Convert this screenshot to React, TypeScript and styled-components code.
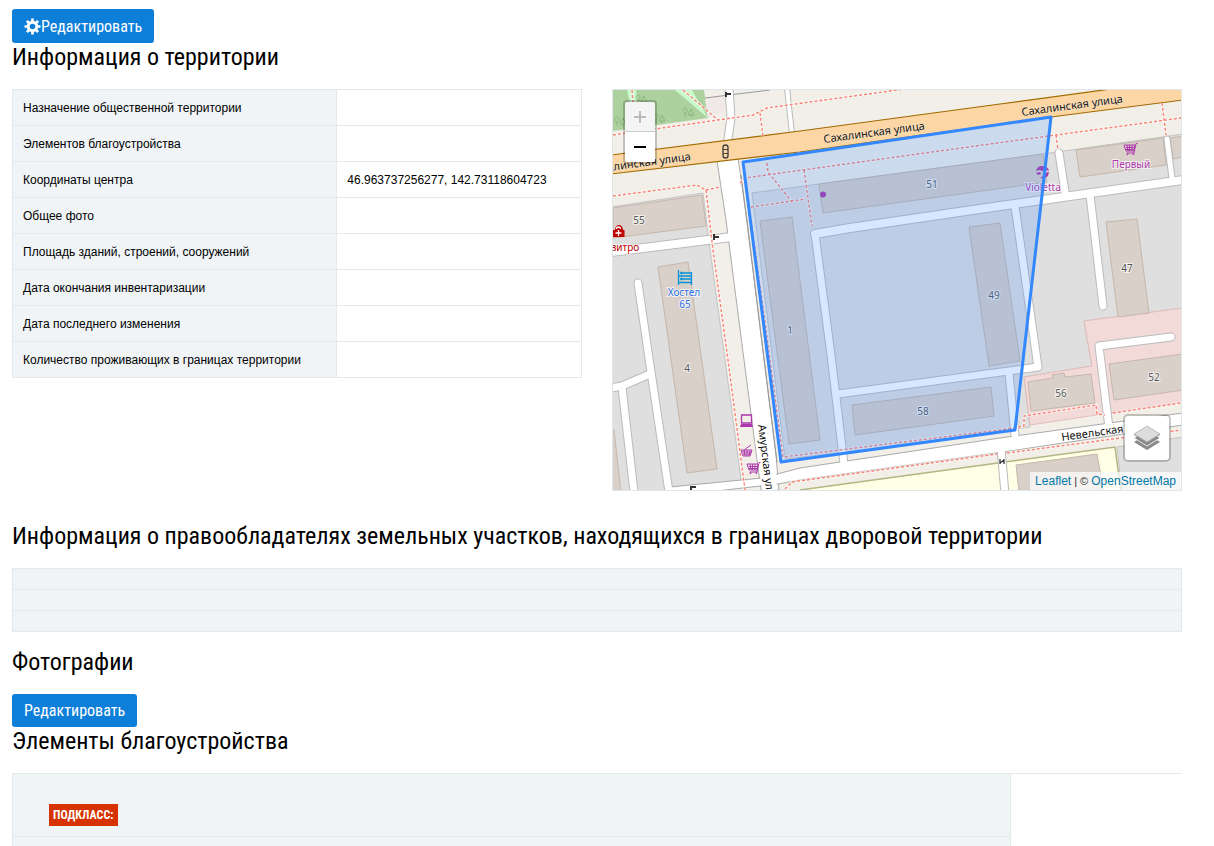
import React from "react";
import styled, { createGlobalStyle } from "styled-components";

const GlobalStyle = createGlobalStyle`
  *, *::before, *::after { box-sizing: border-box; }
  body {
    margin: 0;
    background: #fff;
    color: #000;
    font: 12px/20px "Liberation Sans", Arial, sans-serif;
  }
`;

const condensed = `"Roboto Condensed", "Liberation Sans Narrow", Roboto, sans-serif`;

const Page = styled.main`
  padding: 9px 32px 0 12px;
`;

const EditButton = styled.button<{ $withIcon?: boolean }>`
  display: flex;
  align-items: center;
  height: ${(p) => (p.$withIcon ? 34 : 33)}px;
  padding: 1px 12px 0;
  border: 0;
  border-radius: 3px;
  background: #0e7fd9;
  color: #fff;
  font: 16px/24px ${condensed};
  cursor: pointer;
`;

const Heading = styled.h2`
  margin: 0 0 18px;
  font: 400 24px/28px ${condensed};
`;

const Columns = styled.section`
  display: grid;
  grid-template-columns: 1fr 1fr;
  align-items: start;
  gap: 30px;
  margin-bottom: 31px;
`;

const Table = styled.table`
  width: 100%;
  border-collapse: collapse;
  table-layout: fixed;
`;

const LabelCell = styled.th`
  width: 57%;
  height: 36px;
  padding: 0 10px;
  border: 1px solid #e4e9ec;
  background: #f0f4f7;
  font-weight: 400;
  text-align: left;
`;

const ValueCell = styled.td`
  padding: 0 10px;
  border: 1px solid #e4e9ec;
`;

const OwnersTable = styled(Table)`
  margin-bottom: 16px;
`;

const OwnerCell = styled.td`
  height: 21px;
  padding: 0;
  border: 1px solid #e4e9ec;
  background: #f0f4f7;
`;

const ElementsTable = styled(Table)`
  border-top: 1px solid #e4e9ec;
`;

const ElementCell = styled.td<{ $tall?: boolean }>`
  width: 998px;
  height: ${(p) => (p.$tall ? 63 : 10)}px;
  padding: ${(p) => (p.$tall ? "20px 36px 0" : "0")};
  border: 1px solid #e4e9ec;
  border-bottom: 0;
  background: #f0f4f7;
`;

const EmptyCell = styled.td`
  padding: 0;
`;

const Tag = styled.span`
  display: inline-block;
  padding: 0 4px;
  background: #d63300;
  color: #fff;
  font: 700 12px/22px ${condensed};
  text-transform: uppercase;
`;

const MapFrame = styled.div`
  position: relative;
  height: 402px;
  border: 1px solid #e0e6ea;
  overflow: hidden;
`;

const MapCanvas = styled.svg`
  display: block;
  width: 100%;
  height: 100%;
`;

const ZoomControl = styled.div`
  position: absolute;
  top: 10px;
  left: 10px;
  border: 2px solid rgba(0, 0, 0, 0.2);
  border-radius: 4px;
  background-clip: padding-box;
  overflow: hidden;
`;

const ZoomButton = styled.button`
  display: flex;
  align-items: center;
  justify-content: center;
  width: 30px;
  height: 30px;
  padding: 0;
  border: 0;
  background: #fff;
  color: #000;

  &:disabled {
    border-bottom: 1px solid #ccc;
    background: #f4f4f4;
    color: #bbb;
  }
`;

const LayersButton = styled.button`
  position: absolute;
  right: 10px;
  bottom: 28px;
  display: flex;
  align-items: center;
  justify-content: center;
  width: 48px;
  height: 48px;
  padding: 0;
  border: 2px solid rgba(0, 0, 0, 0.2);
  border-radius: 5px;
  background: #fff;
  background-clip: padding-box;
`;

const Attribution = styled.div`
  position: absolute;
  right: 0;
  bottom: 0;
  padding: 1px 5px 0;
  background: rgba(255, 255, 255, 0.7);
  color: #333;
  font-size: 11px;
  line-height: 17px;
  white-space: nowrap;

  a {
    color: #0078a8;
    font-size: 12px;
    text-decoration: none;
  }
`;

const info: [string, string][] = [
  ["Назначение общественной территории", ""],
  ["Элементов благоустройства", ""],
  ["Координаты центра", "46.963737256277, 142.73118604723"],
  ["Общее фото", ""],
  ["Площадь зданий, строений, сооружений", ""],
  ["Дата окончания инвентаризации", ""],
  ["Дата последнего изменения", ""],
  ["Количество проживающих в границах территории", ""],
];

const buildings = [
  "613,208 702,195 706,226 613,238",
  "819,184 1043,154 1047,182 823,213",
  "1076,150 1163,138 1166,165 1080,177",
  "1170,138 1183,136 1183,157 1173,159",
  "760,221 792,217 820,440 789,444",
  "969,227 1000,223 1020,361 989,366",
  "1106,222 1137,219 1149,313 1118,317",
  "658,267 688,262 717,469 687,473",
  "852,405 991,387 994,416 855,435",
  "1028,382 1053,378 1052,375 1064,373 1065,377 1091,374 1095,403 1031,411",
  "1109,364 1183,354 1183,390 1114,400",
  "611,430 614,430 621,492 611,492",
  "1016,465 1097,454 1104,492 1019,492",
];

const roads: [string, number][] = [
  ["M729 88L731 118L727 146", 7],
  ["M787 88L792 134", 4],
  ["M611 252L732 237", 8],
  ["M638 283L648.500 355L669 492", 7],
  ["M611 388L622 386L650 374", 7],
  ["M622 387L634 492", 7],
  ["M815 234L850 228L1000 206L1183 180", 8],
  ["M815 234L831 355L844 464", 7],
  ["M1015 207L1017 220L1037 360L1038 367L838 394", 7],
  ["M1009 373L1015 436", 7],
  ["M1059 153L1065 192", 7],
  ["M1167 139L1172 178", 5],
  ["M1090 195L1103 306", 7],
  ["M1171 337L1099 346L1109 428", 7],
  ["M1001 448L1005 494", 7],
];

const footways = [
  "M613 135L753 115L767 108L810 102L905 89",
  "M760 113L763 136",
  "M632 90L633 104",
  "M683 90L718 120",
  "M613 196L697 185L706 190L720 187",
  "M706 190L713 250L728 360L745 490",
  "M740 183L745 178L752 177L990 144L1181 118",
  "M767 163L768 172L792 202",
  "M804 170L812 226",
  "M751 207L806 199",
  "M752 226L770 360L783 457L1000 430L1013 428L1024 426L1024 416L1096 405L1097 414L1105 415",
  "M1056 135L1058 150",
  "M1162 103L1166 135",
  "M1007 453L1181 430",
  "M1113 413L1181 403",
  "M785 489L792 482L997 454",
];

const houseNumbers: [number, number, string][] = [
  [639, 224, "55"], [932, 188, "51"], [790, 334, "1"], [994, 299, "49"], [1127, 272, "47"],
  [687, 372, "4"], [923, 415, "58"], [1061, 397, "56"], [1154, 381, "52"],
];

const trees: [number, number][] = [[621, 122], [642, 100], [660, 119], [689, 113]];

function GearIcon() {
  return (
    <svg width="17" height="17" viewBox="0 0 17 17" fill="none" stroke="currentColor" aria-hidden="true">
      <circle cx="8.500" cy="8.500" r="4.300" strokeWidth="3" />
      <path
        d="M8.500 .500V4M8.500 13V16.500M.500 8.500H4M13 8.500H16.500M2.900 2.900L5.200 5.200M11.800 11.800L14.100 14.100M14.100 2.900L11.800 5.200M5.200 11.800L2.900 14.100"
        strokeWidth="2.700"
      />
    </svg>
  );
}

function Cart({ x, y }: { x: number; y: number }) {
  return (
    <g transform={`translate(${x} ${y})`} fill="none" stroke="#ac39ac">
      <path d="M0 2H11L10 8H2ZM2 4.500H11M2 6.500H10M3 2L4 8M5.500 2V8M8 2V8" />
      <path d="M13.500 .500H12L10 10H3" />
      <circle cx="3.500" cy="11" r=".7" />
      <circle cx="9.500" cy="11" r=".7" />
    </g>
  );
}

function TerritoryMap() {
  return (
    <MapCanvas viewBox="613 90 568 400" preserveAspectRatio="xMidYMid slice" role="img" aria-label="Карта территории">
      <rect x="0" y="0" width="2000" height="900" fill="#f2efe9" />

      <path d="M613 90H704L708 118L613 131Z" fill="#add19e" />
      <path d="M675 90H692L708 118ZM627 90H636L638 103H630Z" fill="#c8facc" />
      <path d="M705 98L728 94L731 108L708 118Z" fill="#f1e9e8" />
      <path d="M705 98L770 90" stroke="#999" />
      <g fill="none" stroke="#8ab87e" strokeWidth="1">
        {trees.map(([x, y]) => (
          <path key={x} transform={`translate(${x} ${y})`} d="M-4 4V0M-4 0A2 2.500 0 1 1 -3.900 0M2 4V2M-1 2L2 -4L5 2Z" />
        ))}
      </g>

      <g fill="#dfdfdf" stroke="#c4c4c4">
        <path d="M611 207L703 193L708 235L725 360L741 480L660 492H611Z" />
        <path d="M752 193L819 184L1043 154L1183 134V308L1084 321L1092 366L1024 377L1030 427L847 452L785 459Z" />
        <path d="M1117 447L1183 437V492H1122Z" />
      </g>
      <path d="M1084 321L1183 308V402L1030 425L1024 377L1092 366Z" fill="#f2dad9" stroke="#e3bcba" />
      <path d="M800 490L998 463L1002 492H800ZM1005 462L1115 447L1121 492H1008Z" fill="#ffffe5" />
      <path d="M800 490L998 463M1005 462L1115 447L1121 492" fill="none" stroke="#b5b482" strokeWidth="1.500" />

      <g fill="#d9d0c9" stroke="#c6b7aa">
        {buildings.map((points) => <polygon key={points} points={points} />)}
      </g>

      <g fill="none" stroke="#bbb" strokeLinecap="round" strokeLinejoin="round">
        {roads.map(([d, w]) => <path key={d} d={d} strokeWidth={w + 2} />)}
      </g>
      <g fill="#fff" stroke="#aaa">
        <path d="M717 161L726 220L744 360L761 490H779L776 455L764 360L747 220L738 158Z" />
        <path d="M670 487L762 478L800 468L1000 438L1183 413V425L1010 451L800 480L778 484L672 496Z" />
      </g>
      <path d="M755 440L763 496H777.500L774 445Z" fill="#fff" />
      <g fill="none" stroke="#fff" strokeLinecap="round" strokeLinejoin="round">
        {roads.map(([d, w]) => <path key={d} d={d} strokeWidth={w} />)}
      </g>
      <path d="M741 175L777 462" stroke="#999" />
      <path d="M611 155L800 131L1000 104L1126 87H1183V100L1051 117L800 152L611 174Z" fill="#fcd6a4" stroke="#a06b00" strokeWidth="1.200" />

      <g fill="none" stroke="#fff" strokeOpacity=".5" strokeWidth="3">
        {footways.map((d) => <path key={d} d={d} />)}
      </g>
      <g fill="none" stroke="#fa8072" strokeWidth="1.400" strokeDasharray="3 2">
        {footways.map((d) => <path key={d} d={d} />)}
      </g>

      <g fill="none" stroke="#333" strokeWidth="2">
        <path d="M726 92V97M726 94H731M714 234V240M714 237H719M691 486V490M690 487H696" />
        <path d="M1000 459V464M1004 459V464M1000 463L1004 460" strokeWidth="1.300" />
      </g>
      <g fill="#fcd6a4" stroke="#444">
        <rect x="723" y="145" width="5" height="13" rx="2.500" strokeWidth="1.400" />
        <path d="M723 149.500H728M723 153.500H728" />
      </g>

      <g fontFamily='"Noto Sans", sans-serif' fontSize="11" fill="#111" stroke="#fff" strokeOpacity=".4" strokeWidth="1" paintOrder="stroke">
        <text transform="translate(824 143) rotate(-7.700)">Сахалинская улица</text>
        <text transform="translate(1022 116) rotate(-7.700)">Сахалинская улица</text>
        <text transform="translate(691 160) rotate(-7.700)" textAnchor="end">Сахалинская улица</text>
        <text transform="translate(1062 441) rotate(-8)">Невельская улица</text>
        <text transform="translate(758 425) rotate(83)">Амурская улица</text>
      </g>
      <g fontFamily='"Noto Sans", sans-serif' fontSize="10" fill="#555" stroke="#fff" strokeOpacity=".7" strokeWidth="2" paintOrder="stroke" textAnchor="middle">
        {houseNumbers.map(([x, y, n]) => <text key={n} x={x} y={y}>{n}</text>)}
        <text x="1131" y="168" fill="#ac39ac">Первый</text>
        <text x="1043" y="191" fill="#ac39ac">Violetta</text>
        <text x="684" y="296" fill="#2b72e8">Хостел</text>
        <text x="685" y="308" fill="#2b72e8">65</text>
        <text x="625" y="251" fill="#bf0000">витро</text>
      </g>

      <Cart x={1124} y={143} />
      <Cart x={747} y={462} />
      <path d="M741 450H752L750 456H743ZM742 452H752M743 454H751M744 450L745 456M747 450V456M750 450L749 456M744 450L751 445" fill="none" stroke="#ac39ac" />
      <path d="M741.500 415H751.500V423H741.500Z" fill="none" stroke="#ac39ac" strokeWidth="1.300" />
      <path d="M741 424H752L753 427H740Z" fill="#ac39ac" />
      <g stroke="#0092da" fill="#0092da">
        <path d="M678.500 270V285M691.500 272V285M678 276H692M678 282.500H692M683 273H691M683 279H691" strokeWidth="1.300" />
        <circle cx="681.500" cy="273" r="1" />
        <circle cx="681.500" cy="279" r="1" />
      </g>
      <path d="M613 230H615A4 5 0 0 1 623 230H624.500V237H613Z" fill="#bf0000" />
      <path d="M616.500 229A2 2 0 0 1 620.500 229M618.500 230V236M615.500 233H621.500" fill="none" stroke="#fff" strokeWidth="1.300" />
      <path d="M1036 171Q1037 166 1042 166Q1048 166 1049 171L1046 170L1043 171L1039 170ZM1036 173L1040 172L1041 174L1038 175ZM1044 173L1049 172L1048 176Q1045 179 1040 178Q1044 176 1044 173Z" fill="#ac39ac" />
      <circle cx="823" cy="194.500" r="3" fill="#ac39ac" />

      <path d="M743 162L1051 117L1015 430L781 462Z" fill="#3388ff" fillOpacity=".2" stroke="#3388ff" strokeWidth="3" strokeLinejoin="round" />
    </MapCanvas>
  );
}

function LayersIcon() {
  return (
    <svg width="26" height="26" viewBox="0 0 26 26" aria-hidden="true">
      <path d="M0 17L13 9L26 17L13 25Z" fill="#8a8a8a" />
      <path d="M0 13L13 5L26 13L13 21Z" fill="#888" stroke="#fff" strokeWidth=".8" />
      <path d="M0 9L13 1L26 9L13 17Z" fill="#dcdcdc" stroke="#b2b2b2" strokeWidth=".8" />
      <path d="M0 9L13 17L26 9V10L13 18L0 10Z" fill="#999" />
    </svg>
  );
}

export default function App() {
  return (
    <>
      <GlobalStyle />
      <Page>
        <EditButton type="button" $withIcon><GearIcon />Редактировать</EditButton>
        <Heading>Информация о территории</Heading>
        <Columns>
          <Table>
            <tbody>
              {info.map(([label, value]) => (
                <tr key={label}>
                  <LabelCell scope="row">{label}</LabelCell>
                  <ValueCell>{value}</ValueCell>
                </tr>
              ))}
            </tbody>
          </Table>
          <MapFrame>
            <TerritoryMap />
            <ZoomControl>
              <ZoomButton type="button" disabled aria-label="Приблизить">
                <svg width="14" height="14" viewBox="0 0 14 14"><path d="M7 1V13M1 7H13" stroke="currentColor" strokeWidth="2" /></svg>
              </ZoomButton>
              <ZoomButton type="button" aria-label="Отдалить">
                <svg width="14" height="14" viewBox="0 0 14 14"><path d="M1 7H13" stroke="currentColor" strokeWidth="2" /></svg>
              </ZoomButton>
            </ZoomControl>
            <LayersButton type="button" aria-label="Слои"><LayersIcon /></LayersButton>
            <Attribution><a href="#leaflet">Leaflet</a> | © <a href="#osm">OpenStreetMap</a></Attribution>
          </MapFrame>
        </Columns>

        <Heading>Информация о правообладателях земельных участков, находящихся в границах дворовой территории</Heading>
        <OwnersTable>
          <tbody>
            <tr><OwnerCell /></tr>
            <tr><OwnerCell /></tr>
            <tr><OwnerCell /></tr>
          </tbody>
        </OwnersTable>

        <Heading>Фотографии</Heading>
        <EditButton type="button">Редактировать</EditButton>
        <Heading>Элементы благоустройства</Heading>
        <ElementsTable>
          <tbody>
            <tr><ElementCell $tall><Tag>Подкласс:</Tag></ElementCell><EmptyCell /></tr>
            <tr><ElementCell /><EmptyCell /></tr>
          </tbody>
        </ElementsTable>
      </Page>
    </>
  );
}
